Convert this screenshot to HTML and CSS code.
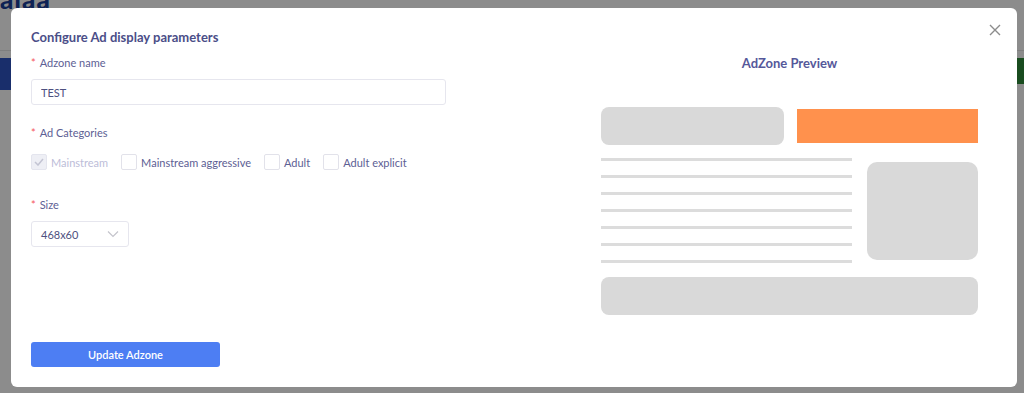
FILE: index.html
```html
<!DOCTYPE html>
<html lang="en">
<head>
    <meta charset="UTF-8">
    <meta name="viewport" content="width=device-width, initial-scale=1.0">
    <title>Configure Adzone</title>
    <link rel="stylesheet" href="styles.css">
</head>
<body>
    <!-- page behind the dialog, dimmed by the mask -->
    <div class="page">
        <div class="page-header">
            <span class="logo">aiaa</span>
        </div>
        <div class="page-body">
            <div class="side-tab"></div>
            <div class="green-btn"></div>
        </div>
    </div>
    <div class="mask"></div>

    <div class="modal">
        <button class="close" aria-label="Close">
            <svg width="12" height="12" viewBox="0 0 12 12"><path d="M1 1L11 11M11 1L1 11" stroke="#8c8c8c" stroke-width="1.4" fill="none"/></svg>
        </button>

        <div class="form-col">
            <h2 class="modal-title">Configure Ad display parameters</h2>

            <div class="form-item">
                <label class="form-label"><span class="req">*</span>Adzone name</label>
                <input class="text-input" type="text" value="TEST">
            </div>

            <div class="form-item">
                <label class="form-label"><span class="req">*</span>Ad Categories</label>
                <div class="checks">
                    <label class="check disabled"><span class="box checked"><svg width="10" height="8" viewBox="0 0 10 8"><path d="M1 4L4 7L9 1" stroke="#c3c4d3" stroke-width="1.5" fill="none"/></svg></span>Mainstream</label>
                    <label class="check"><span class="box"></span>Mainstream aggressive</label>
                    <label class="check"><span class="box"></span>Adult</label>
                    <label class="check"><span class="box"></span>Adult explicit</label>
                </div>
            </div>

            <div class="form-item">
                <label class="form-label"><span class="req">*</span>Size</label>
                <div class="select">
                    <span>468x60</span>
                    <svg width="12" height="8" viewBox="0 0 12 8"><path d="M1 1.5L6 6.5L11 1.5" stroke="#c4c4cc" stroke-width="1.2" fill="none"/></svg>
                </div>
            </div>

            <button class="btn-primary">Update Adzone</button>
        </div>

        <div class="preview-col">
            <h3 class="preview-title">AdZone Preview</h3>
            <div class="preview">
                <div class="pv-top">
                    <div class="pv-block"></div>
                    <div class="pv-ad"></div>
                </div>
                <div class="pv-mid">
                    <div class="pv-lines">
                        <div class="pv-line"></div>
                        <div class="pv-line"></div>
                        <div class="pv-line"></div>
                        <div class="pv-line"></div>
                        <div class="pv-line"></div>
                        <div class="pv-line"></div>
                        <div class="pv-line"></div>
                    </div>
                    <div class="pv-image"></div>
                </div>
                <div class="pv-bottom"></div>
            </div>
        </div>
    </div>
</body>
</html>
```

FILE: styles.css
```css
body {
    margin: 0;
    font-family: 'Lato', 'Noto Sans', sans-serif;
    background: #fff;
    overflow: hidden;
    height: 393px;
}
.page {
    height: 393px;
}
.page-header {
    display: flow-root;
    height: 50px;
    border-bottom: 1px solid #e6e6e6;
}
.logo {
    display: block;
    margin-top: -16px;
    font-size: 26px;
    line-height: 30px;
    font-weight: 900;
    color: #1b3f9a;
    letter-spacing: 1px;
}
.page-body {
    display: flex;
    justify-content: space-between;
    padding-top: 7px;
}
.side-tab {
    width: 20px;
    height: 32px;
    background: #2f54c4;
}
.green-btn {
    width: 20px;
    height: 26px;
    background: #2e8a3a;
}
.mask {
    position: fixed;
    inset: 0;
    background: rgba(0,0,0,0.45);
}

.modal {
    position: fixed;
    left: 11px;
    top: 8px;
    width: 1006px;
    height: 379px;
    box-sizing: border-box;
    padding: 20px 39px 20px 20px;
    background: #fff;
    border-radius: 6px;
    display: flex;
    justify-content: space-between;
}
.close {
    position: absolute;
    top: 14px;
    right: 14px;
    border: none;
    background: none;
    padding: 2px;
    cursor: pointer;
}

.form-col {
    width: 415px;
    display: flex;
    flex-direction: column;
}
.modal-title {
    margin: 0;
    font-size: 13px;
    line-height: 18px;
    font-weight: 700;
    color: #4b4e88;
}
.form-item {
    margin-top: 8px;
}
.form-item + .form-item {
    margin-top: 19px;
}
.form-label {
    display: block;
    font-size: 11px;
    line-height: 18px;
    color: #5d6094;
}
.req {
    color: #f5555b;
    margin-right: 4px;
    font-size: 11px;
}
.text-input {
    display: block;
    margin-top: 7px;
    width: 415px;
    height: 26px;
    box-sizing: border-box;
    border: 1px solid #e6e6ee;
    border-radius: 3px;
    padding: 0 9px;
    font-family: inherit;
    font-size: 11px;
    color: #4d5080;
    outline: none;
}
.checks {
    display: flex;
    gap: 13px;
    margin-top: 12px;
    height: 16px;
}
.check {
    display: flex;
    align-items: center;
    font-size: 11px;
    color: #5d6094;
}
.check.disabled {
    color: #bcbdd8;
}
.box {
    width: 14px;
    height: 14px;
    border: 1px solid #e2e2ea;
    border-radius: 2px;
    margin-right: 4px;
    display: flex;
    align-items: center;
    justify-content: center;
    background: #fff;
}
.box.checked {
    background: #eeeff5;
    border-color: #e4e5ee;
}
.form-item:nth-of-type(3) {
    margin-top: 26px;
}
.select {
    margin-top: 7px;
    width: 98px;
    height: 26px;
    box-sizing: border-box;
    border: 1px solid #e6e6ee;
    border-radius: 3px;
    padding: 0 9px 0 9px;
    display: flex;
    align-items: center;
    justify-content: space-between;
    font-size: 11px;
    color: #4d5080;
}
.btn-primary {
    margin-top: auto;
    width: 189px;
    height: 25px;
    border: none;
    border-radius: 3px;
    background: #4d7ef3;
    color: #fff;
    font-family: inherit;
    font-size: 11px;
    font-weight: 600;
}

.preview-col {
    width: 377px;
}
.preview-title {
    margin: 26px 0 0;
    text-align: center;
    font-size: 13px;
    line-height: 18px;
    font-weight: 700;
    color: #55589a;
}
.preview {
    margin-top: 35px;
}
.pv-top {
    display: flex;
    align-items: center;
    gap: 13px;
    height: 38px;
}
.pv-block {
    width: 183px;
    height: 38px;
    background: #d9d9d9;
    border-radius: 8px;
}
.pv-ad {
    flex: 1;
    height: 34px;
    background: #ff914d;
}
.pv-mid {
    display: flex;
    justify-content: space-between;
    margin-top: 13px;
}
.pv-lines {
    width: 251px;
    height: 105px;
    display: flex;
    flex-direction: column;
    justify-content: space-between;
}
.pv-line {
    height: 3px;
    background: #dcdcdc;
}
.pv-image {
    width: 111px;
    height: 98px;
    margin-top: 4px;
    background: #d9d9d9;
    border-radius: 10px;
}
.pv-bottom {
    margin-top: 14px;
    height: 38px;
    background: #d9d9d9;
    border-radius: 8px;
}
```
